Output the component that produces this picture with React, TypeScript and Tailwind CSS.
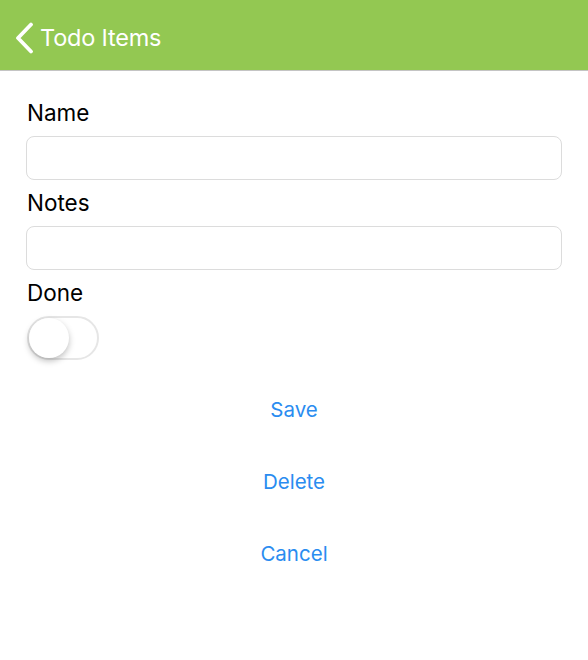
import { useState } from "react";

function Field({ label }: { label: string }) {
  return (
    <>
      <label className="h-[46px] flex items-center pl-px text-[22.5px] text-black">{label}</label>
      <input
        type="text"
        className="h-[44px] w-full rounded-[8px] border border-[#dcdcdc] bg-white px-3 text-[20px] outline-none"
      />
    </>
  );
}

export default function App() {
  const [done, setDone] = useState(false);

  return (
    <div className="w-[588px] h-[660px] bg-white" style={{ fontFamily: "Inter, 'Noto Sans', sans-serif" }}>
      {/* nav bar */}
      <div className="h-[71px] bg-[#93c852] border-b border-[#c4c4c4] flex items-center pt-[5px]">
        <svg width="24" height="32" viewBox="0 0 24 32" className="ml-[12px]" fill="none">
          <path d="M19 2.5 L6 16 L19 29.5" stroke="white" strokeWidth="3.8" strokeLinecap="round" strokeLinejoin="round" />
        </svg>
        <span className="ml-[4px] text-white text-[23.5px] tracking-[-0.2px]">Todo Items</span>
      </div>

      {/* form */}
      <div className="px-[26px] pt-[19px] flex flex-col">
        <Field label="Name" />
        <Field label="Notes" />
        <label className="h-[46px] flex items-center pl-px text-[22.5px] text-black">Done</label>
        <button
          onClick={() => setDone(!done)}
          className={`ml-px w-[72px] h-[44px] rounded-full border-2 flex items-center ${
            done ? "bg-[#4cd964] border-[#4cd964] justify-end" : "bg-white border-[#e6e6e6] justify-start"
          }`}
        >
          <span className="w-[40px] h-[40px] rounded-full bg-white shadow-[0_3px_6px_rgba(0,0,0,0.25)]" />
        </button>
      </div>

      {/* actions */}
      <div className="mt-[14px] flex flex-col">
        {["Save", "Delete", "Cancel"].map((t) => (
          <button key={t} className="h-[72px] flex items-center justify-center text-[20.5px] text-[#2a8cf0]">
            {t}
          </button>
        ))}
      </div>
    </div>
  );
}
